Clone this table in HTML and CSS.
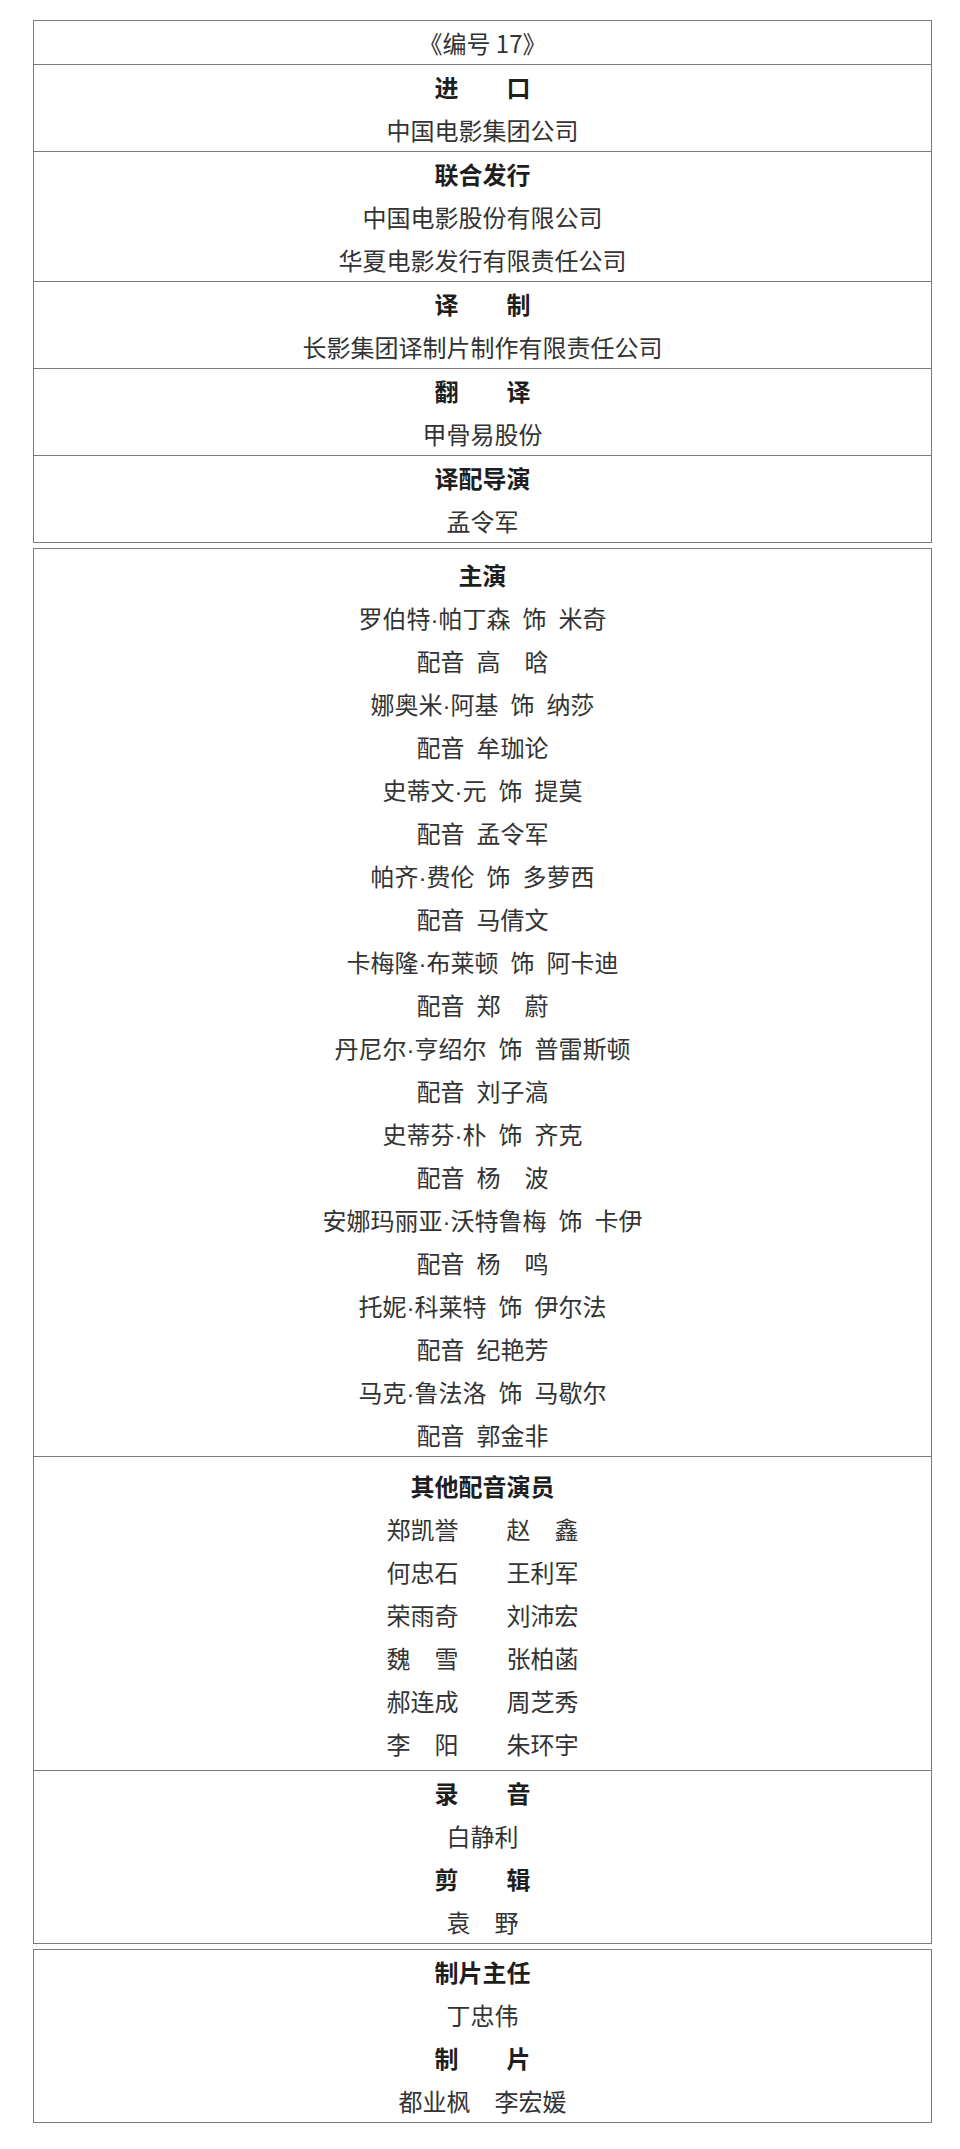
FILE: index.html
```html
<!DOCTYPE html>
<html lang="zh-CN">
<head>
<meta charset="utf-8">
<title>《编号 17》演职员表</title>
<link rel="stylesheet" href="styles.css">
</head>
<body>
<main class="page">
  <section class="credits">
    <div class="row"><p class="line title">《编号 17》</p></div>
    <div class="row">
      <p class="line head">进　　口</p>
      <p class="line">中国电影集团公司</p>
    </div>
    <div class="row">
      <p class="line head">联合发行</p>
      <p class="line">中国电影股份有限公司</p>
      <p class="line">华夏电影发行有限责任公司</p>
    </div>
    <div class="row">
      <p class="line head">译　　制</p>
      <p class="line">长影集团译制片制作有限责任公司</p>
    </div>
    <div class="row">
      <p class="line head">翻　　译</p>
      <p class="line">甲骨易股份</p>
    </div>
    <div class="row">
      <p class="line head">译配导演</p>
      <p class="line">孟令军</p>
    </div>
  </section>

  <section class="credits">
    <div class="row cast">
      <p class="line head">主演</p>
      <p class="line">罗伯特<span class="dot">·</span>帕丁森 饰 米奇</p>
      <p class="line">配音 高　晗</p>
      <p class="line">娜奥米<span class="dot">·</span>阿基 饰 纳莎</p>
      <p class="line">配音 牟珈论</p>
      <p class="line">史蒂文<span class="dot">·</span>元 饰 提莫</p>
      <p class="line">配音 孟令军</p>
      <p class="line">帕齐<span class="dot">·</span>费伦 饰 多萝西</p>
      <p class="line">配音 马倩文</p>
      <p class="line">卡梅隆<span class="dot">·</span>布莱顿 饰 阿卡迪</p>
      <p class="line">配音 郑　蔚</p>
      <p class="line">丹尼尔<span class="dot">·</span>亨绍尔 饰 普雷斯顿</p>
      <p class="line">配音 刘子滈</p>
      <p class="line">史蒂芬<span class="dot">·</span>朴 饰 齐克</p>
      <p class="line">配音 杨　波</p>
      <p class="line">安娜玛丽亚<span class="dot">·</span>沃特鲁梅 饰 卡伊</p>
      <p class="line">配音 杨　鸣</p>
      <p class="line">托妮<span class="dot">·</span>科莱特 饰 伊尔法</p>
      <p class="line">配音 纪艳芳</p>
      <p class="line">马克<span class="dot">·</span>鲁法洛 饰 马歇尔</p>
      <p class="line">配音 郭金非</p>
    </div>
    <div class="row others">
      <p class="line head">其他配音演员</p>
      <p class="line">郑凯誉　　赵　鑫</p>
      <p class="line">何忠石　　王利军</p>
      <p class="line">荣雨奇　　刘沛宏</p>
      <p class="line">魏　雪　　张柏菡</p>
      <p class="line">郝连成　　周芝秀</p>
      <p class="line">李　阳　　朱环宇</p>
    </div>
    <div class="row">
      <p class="line head">录　　音</p>
      <p class="line">白静利</p>
      <p class="line head">剪　　辑</p>
      <p class="line">袁　野</p>
    </div>
  </section>

  <section class="credits">
    <div class="row">
      <p class="line head">制片主任</p>
      <p class="line">丁忠伟</p>
      <p class="line head">制　　片</p>
      <p class="line">都业枫　李宏媛</p>
    </div>
  </section>
</main>
</body>
</html>
```

FILE: styles.css
```css
html, body {
  margin: 0;
  padding: 0;
  background: #ffffff;
}

body {
  font-family: "Noto Sans CJK SC", "Noto Sans", sans-serif;
  font-size: 24px;
  color: #333333;
}

.page {
  padding: 20px 0 0 33px;
}

.credits {
  width: 899px;
  box-sizing: border-box;
  border: 1px solid #7a7a7a;
}

.credits + .credits {
  margin-top: 5px;
}

.row + .row {
  border-top: 1px solid #7a7a7a;
}

.cast {
  padding-top: 4px;
}

.others {
  padding-top: 7px;
  padding-bottom: 5px;
}

.line {
  margin: 0;
  height: 43px;
  line-height: 43px;
  text-align: center;
  word-spacing: 6.6px;
  white-space: nowrap;
}

.title {
  word-spacing: 0;
}

.dot {
  font-family: "Liberation Sans", sans-serif;
}

.head {
  font-weight: 700;
  color: #1e1e1e;
}
```
